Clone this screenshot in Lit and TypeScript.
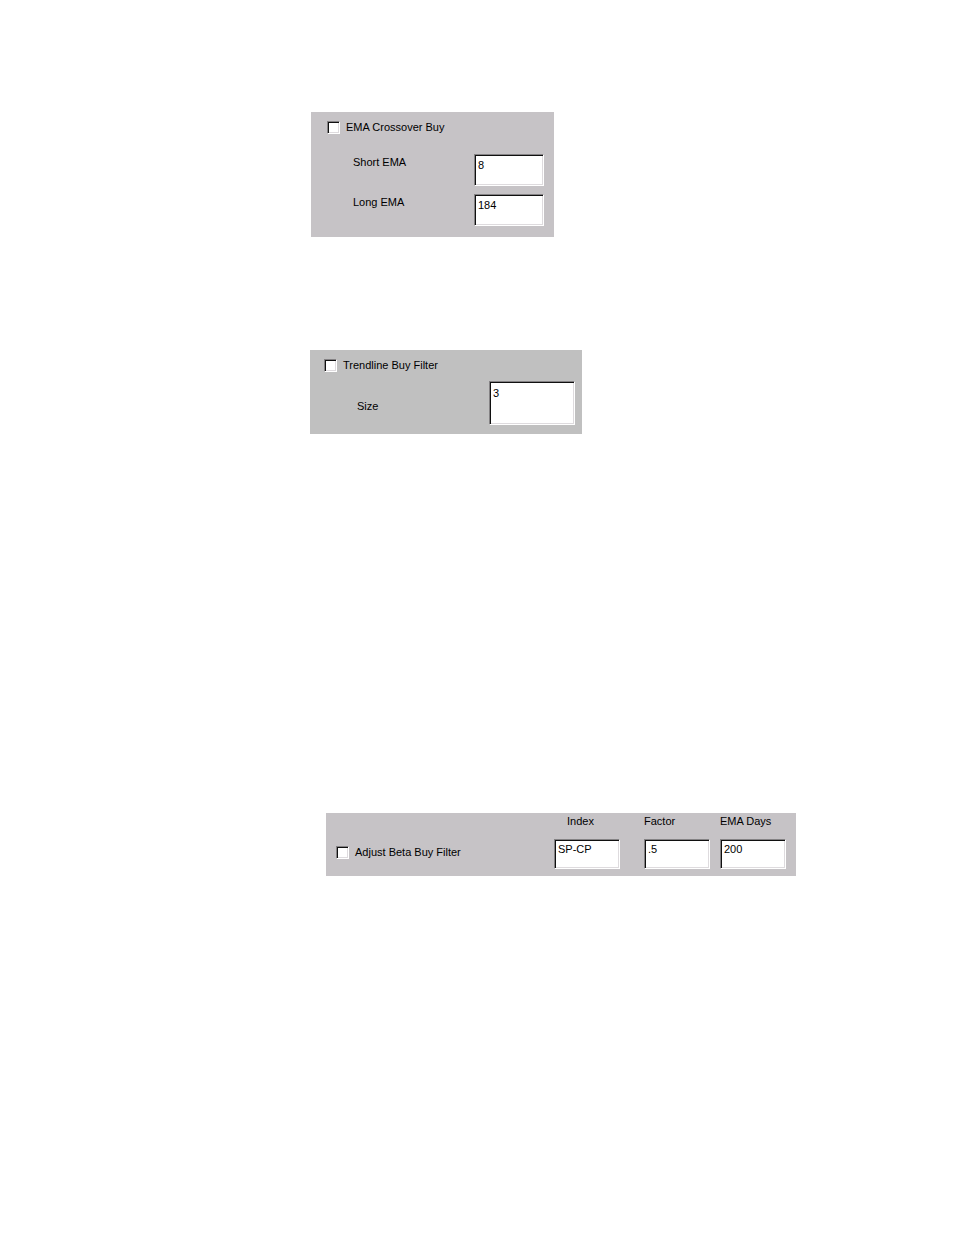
import { LitElement, html, css } from "lit";
import { customElement } from "lit/decorators.js";

@customElement("app-root")
export class AppRoot extends LitElement {
  static styles = css`
    :host {
      display: block;
      min-height: 100vh;
      box-sizing: border-box;
      padding: 112px 16px 48px 310px;
      background: #fff;
      color: #000;
      font: 11px/14px "Liberation Sans", Arial, sans-serif;
    }
    * {
      box-sizing: border-box;
    }
    form {
      display: grid;
      justify-items: start;
    }
    fieldset {
      margin: 0;
      border: 0;
      min-width: 0;
      max-width: 100%;
      background: #c6c3c6;
    }
    .check {
      display: flex;
      align-items: center;
      gap: 6px;
    }
    .check input {
      appearance: none;
      flex: none;
      width: 13px;
      height: 13px;
      margin: 0;
      background: #fff;
      border: 1px solid;
      border-color: #848284 #fff #fff #848284;
      box-shadow: inset 1px 1px #101010, inset -1px -1px #dedbde;
    }
    .check input:checked {
      background: radial-gradient(#000 3px, #fff 4px);
    }
    .box {
      appearance: none;
      display: block;
      width: 100%;
      height: 32px;
      margin: 0;
      padding: 4px 3px 14px;
      border: 1px solid;
      border-color: #848284 #fff #fff #848284;
      border-radius: 0;
      box-shadow: inset 1px 1px #101010, inset -1px -1px #dedbde;
      background: #fff;
      color: #000;
      font: inherit;
      outline: none;
    }
    .row {
      display: flex;
      justify-content: space-between;
    }
    .crossover {
      width: 243px;
      margin-left: 1px;
      padding: 8px 10px 11px 16px;
    }
    .crossover .rows {
      display: grid;
      gap: 8px;
      padding: 20px 0 0 26px;
    }
    .crossover .row label {
      padding-top: 1px;
    }
    .crossover .box {
      width: 70px;
    }
    .trendline {
      width: 272px;
      margin-top: 113px;
      padding: 8px 7px 9px 14px;
      background: #c0c0c0;
    }
    .trendline .row {
      align-items: center;
      padding: 9px 0 0 33px;
    }
    .trendline .row label {
      padding-top: 6px;
    }
    .trendline .box {
      width: 86px;
      height: 44px;
      padding-bottom: 24px;
    }
    .beta {
      display: flex;
      align-items: flex-end;
      justify-content: space-between;
      width: 470px;
      margin: 379px 0 0 16px;
      padding: 1px 10px 7px;
    }
    .beta .check {
      padding-bottom: 10px;
    }
    .columns {
      display: grid;
      grid-template-columns: 66px 66px 66px;
      column-gap: 10px;
    }
    .column {
      display: grid;
      gap: 11px;
    }
    .column:first-child {
      margin: 0 14px 0 -14px;
    }
    .column:first-child label {
      padding-left: 13px;
    }
    .column .box {
      height: 30px;
      padding-top: 3px;
      padding-bottom: 13px;
    }
  `;

  render() {
    return html`
      <form>
        <fieldset class="crossover" aria-label="EMA Crossover Buy">
          <label class="check"><input type="checkbox" />EMA Crossover Buy</label>
          <div class="rows">
            <div class="row">
              <label for="short">Short EMA</label>
              <input class="box" id="short" type="text" value="8" />
            </div>
            <div class="row">
              <label for="long">Long EMA</label>
              <input class="box" id="long" type="text" value="184" />
            </div>
          </div>
        </fieldset>

        <fieldset class="trendline" aria-label="Trendline Buy Filter">
          <label class="check"><input type="checkbox" />Trendline Buy Filter</label>
          <div class="row">
            <label for="size">Size</label>
            <input class="box" id="size" type="text" value="3" />
          </div>
        </fieldset>

        <fieldset class="beta" aria-label="Adjust Beta Buy Filter">
          <label class="check"><input type="checkbox" />Adjust Beta Buy Filter</label>
          <div class="columns">
            <div class="column">
              <label for="index">Index</label>
              <input class="box" id="index" type="text" value="SP-CP" />
            </div>
            <div class="column">
              <label for="factor">Factor</label>
              <input class="box" id="factor" type="text" value=".5" />
            </div>
            <div class="column">
              <label for="days">EMA Days</label>
              <input class="box" id="days" type="text" value="200" />
            </div>
          </div>
        </fieldset>
      </form>
    `;
  }
}
